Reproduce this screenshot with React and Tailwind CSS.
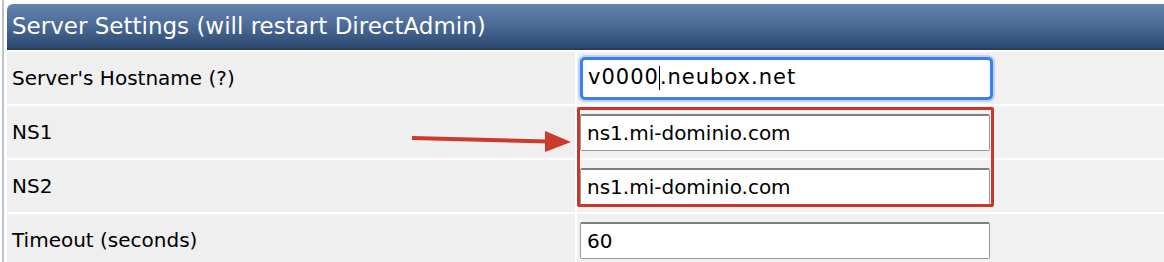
export default function App() {
  const rows = [
    { label: "Server's Hostname (?)", value: "v0000.neubox.net", focus: true },
    { label: "NS1", value: "ns1.mi-dominio.com" },
    { label: "NS2", value: "ns1.mi-dominio.com" },
    { label: "Timeout (seconds)", value: "60" },
  ];

  return (
    <div className="relative w-[1164px] h-[262px] overflow-hidden bg-white font-['DejaVu_Sans',Verdana,sans-serif]">
      <div className="h-full ml-[2px] pl-[3px] border-l-2 border-[#b9c1d6] pt-[4px] flex flex-col">
        {/* Header */}
        <div className="h-[46px] shrink-0 rounded-tl-[6px] border-b-2 border-[#2a3c57] bg-gradient-to-b from-[#6584ad] via-[#4a6a96] to-[#2c4870] flex items-center pl-[5px]">
          <span className="text-white text-[23px] leading-none">
            Server Settings (will restart DirectAdmin)
          </span>
        </div>

        {/* Rows */}
        <div className="flex flex-col gap-[2px] pt-[2px] bg-white">
          {rows.map((row, i) => (
            <div key={i} className="grid grid-cols-[568px_1fr] gap-[2px] h-[52px] shrink-0">
              <div className="bg-[#efefef] flex items-center pl-[5px] text-[20px] text-black">
                {row.label}
              </div>
              <div className="bg-[#f1f1f1] flex items-center pl-[3px]">
                {row.focus ? (
                  <div className="w-[413px] h-[43px] rounded-[5px] border-[3px] border-[#3d7ef2] ring-2 ring-[#bcd2f7] bg-white flex items-center px-[5px] text-[21px] tracking-[1px] text-black">
                    v0000<span className="border-l border-black h-[24px]"></span>.neubox.net
                  </div>
                ) : (
                  <div className="w-[410px] h-[37px] rounded-[2px] border border-[#9a9a9a] border-t-2 border-t-[#7f7f7f] bg-white flex items-center px-[6px] text-[20px] text-black">
                    {row.value}
                  </div>
                )}
              </div>
            </div>
          ))}
        </div>
      </div>

      {/* Annotation: red box */}
      <div className="absolute left-[577px] top-[107px] w-[417px] h-[100px] border-[3px] border-[#c9362a] rounded-[2px]"></div>

      {/* Annotation: arrow */}
      <svg className="absolute left-[405px] top-[125px]" width="175" height="35" viewBox="0 0 175 35">
        <line x1="7" y1="13" x2="143" y2="16.5" stroke="#cc3a2c" strokeWidth="4" />
        <polygon points="140,6 166,17 140,27" fill="#cc3a2c" />
      </svg>
    </div>
  );
}
